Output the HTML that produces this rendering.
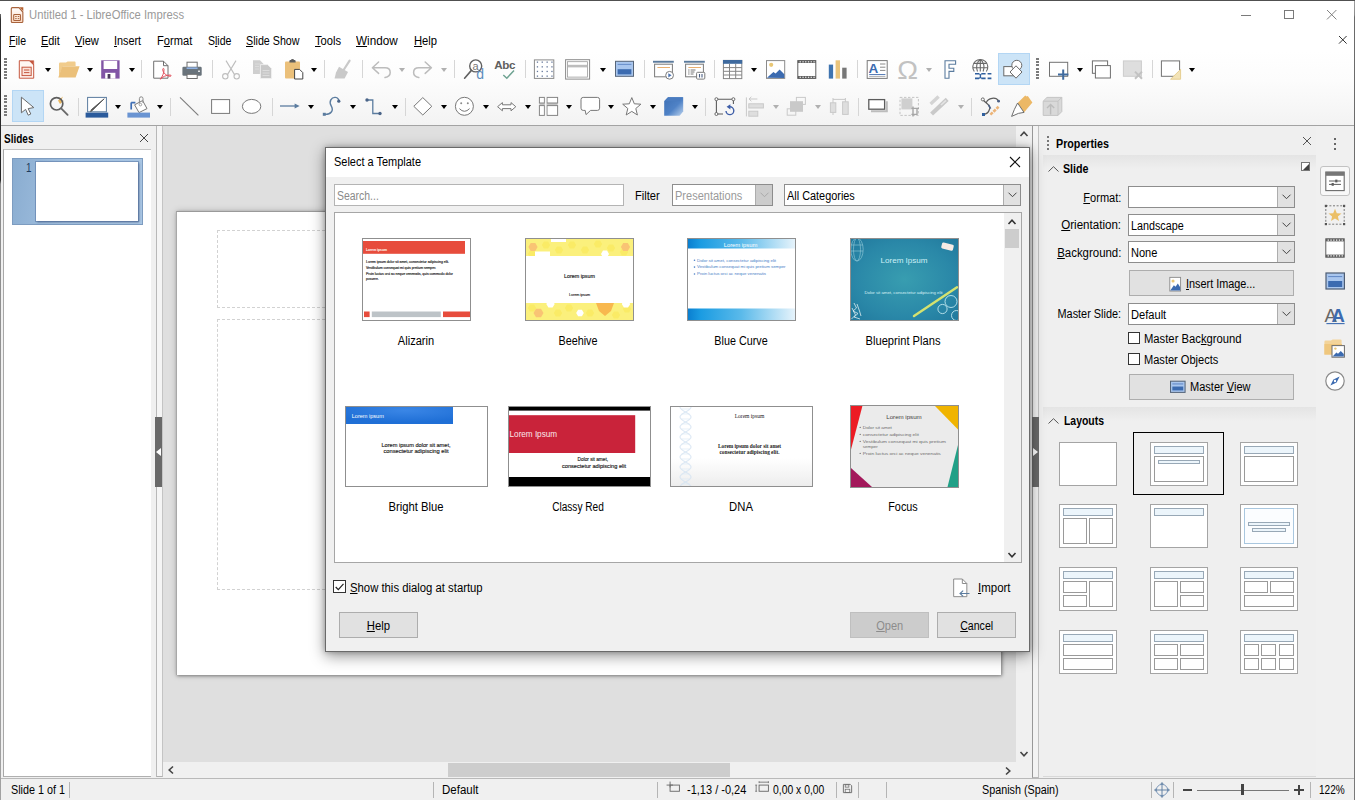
<!DOCTYPE html><html><head><meta charset="utf-8"><title>Untitled 1 - LibreOffice Impress</title><style>
*{box-sizing:border-box;margin:0;padding:0}
html,body{width:1355px;height:800px;overflow:hidden;background:#f0f0f0}
body{position:relative;font-family:"Liberation Sans",sans-serif;font-size:12px;letter-spacing:-0.33px;color:#000;line-height:14px}
.a{position:absolute}
.t{position:absolute;white-space:nowrap;height:14px;line-height:14px;letter-spacing:0;transform-origin:0 50%}
.tr{transform-origin:100% 50%}
.fx{display:inline-block;letter-spacing:0;white-space:nowrap}
u{text-decoration:underline;text-underline-offset:1px}
.sep{position:absolute;width:1px;height:18px;background:#d6d6d6}
.dd{position:absolute;width:0;height:0;border-left:3px solid transparent;border-right:3px solid transparent;border-top:4px solid #000}
.dd.g{border-top-color:#b0b0b0}
svg{position:absolute;overflow:visible}
.combo{position:absolute;height:22px;background:#fff;border:1px solid #8d8d8d}
.combo .btn{position:absolute;right:0;top:0;bottom:0;width:17px;background:#e1e1e1;border-left:1px solid #adadad}
.combo .txt{position:absolute;left:2px;top:4px;white-space:nowrap;height:14px;line-height:14px}
.btnb{position:absolute;background:#e1e1e1;border:1px solid #adadad;text-align:center}
.lay{position:absolute;width:58px;height:44px;background:#fff;border:1px solid #a4a4a4}
.lay i{position:absolute;display:block;border:1px solid #9a9a9a;background:#fff}
.lay i.h{background:#ecf5fb;border-color:#98a8b6}
.lay i.f{background:#fbfdff;border-color:#a9c7df}
.lbl{position:absolute;white-space:nowrap;text-align:center;width:160px;height:14px;line-height:14px;font-size:12px}
</style></head><body>
<div class="a" style="left:0;top:0;width:1355px;height:30px;background:#fff"></div>
<div class="a" style="left:0;top:0;width:1355px;height:1px;background:#505050"></div>
<svg class="ic" style="left:7.5px;top:6.0px" width="18" height="18" viewBox="0 0 24 24"><defs><linearGradient id="apg" x1="0" y1="0" x2="0" y2="1"><stop offset="0" stop-color="#fff"/><stop offset="1" stop-color="#fbd5bd"/></linearGradient></defs><path d="M4.4 3.6Q4.4 2.2 5.8 2.2H14.6L19.8 8V20.6Q19.8 22 18.4 22H5.8Q4.4 22 4.4 20.6Z" fill="url(#apg)" stroke="#a8633c" stroke-width="1.5"/><path d="M15.4 1.6H20.4V7Z" fill="#b5602f"/><rect x="7.6" y="11.4" width="9" height="8" rx="1" fill="#fde6d6" stroke="#a8633c" stroke-width="1.4"/><path d="M9.6 14H11.6M13 14H15M9.6 16.8H11.6M13 16.8H15" stroke="#a8633c" stroke-width="1.3"/></svg>
<div class="t" style="left:29px;top:8.3px;transform:scaleX(0.9386);color:#9a9a9a">Untitled 1 - LibreOffice Impress</div>
<div class="a" style="left:1241px;top:14.5px;width:9.5px;height:1px;background:#7a7a7a"></div>
<div class="a" style="left:1284px;top:9.5px;width:9.5px;height:9.5px;border:1px solid #7a7a7a"></div>
<svg style="left:1327.4px;top:9.5px" width="9.4" height="9.4" viewBox="0 0 10 10"><path d="M0 0L10 10M10 0L0 10" stroke="#7a7a7a" stroke-width="1" fill="none"/></svg>
<div class="a" style="left:0;top:30px;width:1355px;height:21px;background:#fff"></div>
<div class="t" style="left:8.8px;top:34px;transform:scaleX(0.8788);"><u>F</u>ile</div>
<div class="t" style="left:40.9px;top:34px;transform:scaleX(0.9094);"><u>E</u>dit</div>
<div class="t" style="left:74.8px;top:34px;transform:scaleX(0.9226);"><u>V</u>iew</div>
<div class="t" style="left:114.2px;top:34px;transform:scaleX(0.9033);"><u>I</u>nsert</div>
<div class="t" style="left:156.8px;top:34px;transform:scaleX(0.9263);">F<u>o</u>rmat</div>
<div class="t" style="left:207.5px;top:34px;transform:scaleX(0.8768);">S<u>l</u>ide</div>
<div class="t" style="left:246.4px;top:34px;transform:scaleX(0.8912);"><u>S</u>lide Show</div>
<div class="t" style="left:315.2px;top:34px;transform:scaleX(0.9316);"><u>T</u>ools</div>
<div class="t" style="left:356.3px;top:34px;transform:scaleX(0.9769);"><u>W</u>indow</div>
<div class="t" style="left:413.5px;top:34px;transform:scaleX(0.9357);"><u>H</u>elp</div>
<svg style="left:1339px;top:36.3px" width="7.6" height="7.6" viewBox="0 0 9 9"><path d="M0 0L9 9M9 0L0 9" stroke="#222" stroke-width="1.1" fill="none"/></svg>
<div class="a" style="left:0;top:51px;width:1355px;height:75px;background:linear-gradient(#ffffff,#fcfcfc 40%,#f3f3f3);border-bottom:1px solid #a3a3a3"></div>
<div class="a" style="left:4px;top:58px;width:2.6px;height:22.4px;background:repeating-linear-gradient(#7a7a7a 0 2px,transparent 2px 3.2px)"></div>
<div class="a" style="left:4px;top:95px;width:2.6px;height:22.4px;background:repeating-linear-gradient(#7a7a7a 0 2px,transparent 2px 3.2px)"></div>
<div class="a" style="left:1036px;top:58px;width:2.6px;height:22.4px;background:repeating-linear-gradient(#7a7a7a 0 2px,transparent 2px 3.2px)"></div>
<div class="a" style="left:998px;top:53px;width:32px;height:32px;background:#cce4f7;border:1px solid #b3d6f4"></div>
<div class="a" style="left:12px;top:90px;width:32px;height:32px;background:#cce4f7;border:1px solid #b3d6f4"></div>
<div class="dd" style="left:44.7px;top:67.6px"></div>
<div class="dd" style="left:86.8px;top:67.6px"></div>
<div class="dd" style="left:128.5px;top:67.6px"></div>
<div class="sep" style="left:141.0px;top:60.2px"></div>
<div class="sep" style="left:211.5px;top:60.2px"></div>
<div class="dd" style="left:310.7px;top:67.6px"></div>
<div class="sep" style="left:323.5px;top:60.2px"></div>
<div class="sep" style="left:362.0px;top:60.2px"></div>
<div class="dd g" style="left:399.0px;top:67.6px"></div>
<div class="dd g" style="left:441.0px;top:67.6px"></div>
<div class="sep" style="left:453.7px;top:60.2px"></div>
<div class="sep" style="left:524.5px;top:60.2px"></div>
<div class="dd" style="left:600.0px;top:67.6px"></div>
<div class="sep" style="left:643.5px;top:60.2px"></div>
<div class="sep" style="left:714.0px;top:60.2px"></div>
<div class="dd" style="left:751.0px;top:67.6px"></div>
<div class="sep" style="left:857.0px;top:60.2px"></div>
<div class="dd g" style="left:925.6px;top:67.6px"></div>
<div class="dd" style="left:1077.0px;top:67.6px"></div>
<div class="sep" style="left:1152.0px;top:60.2px"></div>
<div class="dd" style="left:1188.6px;top:67.6px"></div>
<div class="sep" style="left:78.0px;top:97.7px"></div>
<div class="dd" style="left:115.0px;top:105.1px"></div>
<div class="dd" style="left:157.0px;top:105.1px"></div>
<div class="sep" style="left:170.0px;top:97.7px"></div>
<div class="sep" style="left:271.5px;top:97.7px"></div>
<div class="dd" style="left:308.0px;top:105.1px"></div>
<div class="dd" style="left:349.6px;top:105.1px"></div>
<div class="dd" style="left:391.5px;top:105.1px"></div>
<div class="sep" style="left:404.5px;top:97.7px"></div>
<div class="dd" style="left:441.0px;top:105.1px"></div>
<div class="dd" style="left:482.6px;top:105.1px"></div>
<div class="dd" style="left:524.5px;top:105.1px"></div>
<div class="dd" style="left:566.0px;top:105.1px"></div>
<div class="dd" style="left:608.0px;top:105.1px"></div>
<div class="dd" style="left:649.8px;top:105.1px"></div>
<div class="dd" style="left:691.7px;top:105.1px"></div>
<div class="sep" style="left:704.7px;top:97.7px"></div>
<div class="dd g" style="left:772.5px;top:105.1px"></div>
<div class="dd g" style="left:814.7px;top:105.1px"></div>
<div class="sep" style="left:858.0px;top:97.7px"></div>
<div class="dd g" style="left:958.0px;top:105.1px"></div>
<div class="sep" style="left:970.6px;top:97.7px"></div>
<svg style="left:0;top:0" width="1355" height="126" viewBox="0 0 1355 126"><path d="M19.3 60.7H29.5L33.7 64.9V78.2H19.3Z" fill="#fff7f3" stroke="#c5573f"/><path d="M29.5 60.7L33.7 64.9V60.7Z" fill="#c5573f" stroke="#c5573f" stroke-width=".6"/><rect x="22" y="67.2" width="9.2" height="8.4" fill="#fbe3da" stroke="#c5573f"/><path d="M24 70H29.4M24 72.6H29.4" stroke="#c5573f" stroke-width="1"/><path d="M59 76.5V63.8Q59 62.6 60.2 62.6H66L67.6 61.6H74.6Q75.6 61.6 75.6 62.8V66H62.8Z" fill="#f1cc8c"/><path d="M58.3 77.6L62.3 66.2H79.6L75.6 77.6Z" fill="#ebc07a"/><path d="M101.2 60.3H119.6V78.6H101.2Z" fill="#8155a6"/><rect x="103.6" y="60.9" width="13.6" height="8.1" fill="#fff"/><rect x="105.2" y="72.8" width="10.2" height="5.8" fill="#fff"/><rect x="107.6" y="74" width="2.8" height="4.6" fill="#4a3a5c"/><path d="M153.7 61.2H163.5L168 65.7V78.2H153.7Z" fill="#fff" stroke="#6e6e6e"/><path d="M163.5 61.2V65.7H168" fill="none" stroke="#6e6e6e"/><path d="M160.3 79.2C162.5 76.5 164.2 72.5 164 69.3C163.9 68 162.6 68.2 162.7 69.6C163 73 166.5 76 170.3 76.3C171.6 76.3 171.3 75 170 75C166.5 75 162.5 76.8 160.3 79.2Z" fill="none" stroke="#e2505c" stroke-width="1"/><rect x="187" y="62.2" width="10.2" height="6" fill="#fff" stroke="#6e6e6e"/><rect x="182.4" y="66.8" width="19.3" height="9" rx="1.2" fill="#69737b"/><rect x="186.6" y="67.4" width="11" height="1.6" fill="#8fb0e0"/><rect x="187" y="74.3" width="10.2" height="4.2" fill="#fff" stroke="#6e6e6e"/><rect x="198" y="70.6" width="2" height="1.2" fill="#fff"/><g fill="none" stroke="#bebebe" stroke-width="1.1"><path d="M226 60.6L235 75.4M236 60.6L227 75.4"/><circle cx="225.3" cy="76.3" r="2.7"/><circle cx="236.7" cy="76.3" r="2.7"/></g><path d="M253 60.3H260L263.6 63.9V74H253Z" fill="#cfcfcf"/><path d="M260.4 64.6H267.6L271.6 68.6V78.6H260.4Z" fill="#c8c8c8" stroke="#f4f4f4" stroke-width=".8"/><path d="M255 64H260M255 66.5H259M255 69H259M262.5 70.5H269.5M262.5 73H269.5M262.5 75.5H269.5" stroke="#dedede" stroke-width=".9"/><rect x="285" y="61.6" width="15" height="17" rx="1" fill="#ebc07a"/><path d="M289.4 62.6V61Q289.4 60 290.4 60H291Q291 59 292.5 59Q294 59 294 60H294.6Q295.6 60 295.6 61V62.6Z" fill="#5d5d5d"/><path d="M294.6 69.4H299.6L302.8 72.6V79H294.6Z" fill="#fff" stroke="#454545"/><path d="M349.6 60.6L343.6 70" stroke="#c9c9c9" stroke-width="2.2" stroke-linecap="round"/><path d="M339 66.8L348 72L344.6 78.6H334.6L336 72.5Z" fill="#c9c9c9"/><g fill="none" stroke="#bcbcbc" stroke-width="1.5" stroke-linecap="round" stroke-linejoin="round"><path d="M378.6 62L372.4 67.7L378.6 73.4M372.6 67.7H385Q390.2 67.7 390.2 72.4Q390.2 76.4 385 77.6"/><path d="M425.2 62L431.4 67.7L425.2 73.4M431.2 67.7H418.8Q413.6 67.7 413.6 72.4Q413.6 76.4 418.8 77.6"/></g><circle cx="475.7" cy="65.9" r="6" fill="#fff" stroke="#606060" stroke-width="1.4"/><path d="M471.4 70.4L464.6 78.2" stroke="#606060" stroke-width="1.6" stroke-linecap="round"/><text x="472.4" y="69.6" font-size="11" fill="#777" font-family="Liberation Sans, sans-serif">a</text><text x="476.2" y="79.4" font-size="14" fill="#5d8dbd" font-family="Liberation Sans, sans-serif">d</text><text x="494.2" y="69" font-size="11.2" font-weight="bold" fill="#5f5f5f" font-family="Liberation Sans, sans-serif" textLength="21" lengthAdjust="spacingAndGlyphs">Abc</text><path d="M503.3 75L506.8 78.2L514 70.6" fill="none" stroke="#6fa392" stroke-width="1.5"/><rect x="534.4" y="59.9" width="19.4" height="18.5" fill="#fff" stroke="#8a8a8a"/><rect x="536.8" y="61.5" width="1.3" height="1.3" fill="#64779a"/><rect x="536.8" y="66.2" width="1.3" height="1.3" fill="#64779a"/><rect x="536.8" y="70.8" width="1.3" height="1.3" fill="#64779a"/><rect x="536.8" y="75.5" width="1.3" height="1.3" fill="#64779a"/><rect x="541.6" y="61.5" width="1.3" height="1.3" fill="#64779a"/><rect x="541.6" y="66.2" width="1.3" height="1.3" fill="#64779a"/><rect x="541.6" y="70.8" width="1.3" height="1.3" fill="#64779a"/><rect x="541.6" y="75.5" width="1.3" height="1.3" fill="#64779a"/><rect x="546.5" y="61.5" width="1.3" height="1.3" fill="#64779a"/><rect x="546.5" y="66.2" width="1.3" height="1.3" fill="#64779a"/><rect x="546.5" y="70.8" width="1.3" height="1.3" fill="#64779a"/><rect x="546.5" y="75.5" width="1.3" height="1.3" fill="#64779a"/><rect x="551.3" y="61.5" width="1.3" height="1.3" fill="#64779a"/><rect x="551.3" y="66.2" width="1.3" height="1.3" fill="#64779a"/><rect x="551.3" y="70.8" width="1.3" height="1.3" fill="#64779a"/><rect x="551.3" y="75.5" width="1.3" height="1.3" fill="#64779a"/><rect x="565.6" y="59.7" width="24" height="19.4" fill="#fff" stroke="#8a8a8a"/><rect x="567.6" y="61.7" width="20" height="15.4" fill="#fff" stroke="#9a9a9a" stroke-width=".8"/><rect x="568" y="64.8" width="19.2" height="2.6" fill="#bdbdbd"/><rect x="615.5" y="61.3" width="18" height="15" fill="#a9c6ee" stroke="#566579"/><rect x="617.6" y="69.2" width="13.8" height="5.2" fill="#3c6bb0"/><path d="M617.6 64.4H631.4" stroke="#5f86c4" stroke-width=".9"/><rect x="653" y="60.8" width="20.8" height="1.9" fill="#5a7a9c"/><rect x="654.6" y="64.2" width="17.8" height="12.6" fill="#fff" stroke="#7a7a7a"/><path d="M657.4 67.5H670" stroke="#eab070" stroke-width="1"/><circle cx="669.6" cy="75.3" r="3.9" fill="#fff" stroke="#7a7a7a"/><path d="M668.3 73.2L671.6 75.3L668.3 77.4Z" fill="#4a72b0"/><rect x="684" y="60.8" width="20.8" height="1.9" fill="#5a7a9c"/><rect x="685.6" y="64.2" width="17.8" height="12.6" fill="#fff" stroke="#7a7a7a"/><path d="M688.4 67.5H701" stroke="#eab070" stroke-width="1"/><path d="M688.4 70H689.4M688.4 72H689.4M688.4 74H689.4" stroke="#444" stroke-width="1"/><path d="M690.6 70H695.5M690.6 72H694.5M690.6 74H693.5" stroke="#666" stroke-width=".9"/><rect x="696.6" y="72.3" width="8.2" height="6.8" rx="1" fill="#fff" stroke="#7a7a7a"/><path d="M699.5 74V77.6M702 74V77.6" stroke="#4a5f85" stroke-width="1.1"/><rect x="723.4" y="60.4" width="18.4" height="18.2" fill="#fff" stroke="#858585"/><rect x="723" y="60" width="19.2" height="3.8" fill="#3f6a9e"/><path d="M729.5 63.8V78.6M735.7 63.8V78.6M723.4 67.6H741.8M723.4 71.3H741.8M723.4 75H741.8" stroke="#858585" stroke-width="1"/><rect x="766.5" y="60.6" width="18.2" height="17.8" fill="#fff" stroke="#8a8a8a"/><circle cx="771.2" cy="64.8" r="2.1" fill="#e9c776"/><path d="M767 77.8L773.4 72L775.6 73.6L779.6 69.6L784.3 74.2V77.9Z" fill="#3c6bb0"/><rect x="797.8" y="60.6" width="18" height="17.8" fill="#fff" stroke="#5e5e5e"/><rect x="797.8" y="60.6" width="18" height="2.4" fill="#5e5e5e"/><rect x="797.8" y="76" width="18" height="2.4" fill="#5e5e5e"/><rect x="799.6" y="61.3" width="1.3" height="1.1" fill="#fff"/><rect x="799.6" y="76.7" width="1.3" height="1.1" fill="#fff"/><rect x="802.4" y="61.3" width="1.3" height="1.1" fill="#fff"/><rect x="802.4" y="76.7" width="1.3" height="1.1" fill="#fff"/><rect x="805.1" y="61.3" width="1.3" height="1.1" fill="#fff"/><rect x="805.1" y="76.7" width="1.3" height="1.1" fill="#fff"/><rect x="807.9" y="61.3" width="1.3" height="1.1" fill="#fff"/><rect x="807.9" y="76.7" width="1.3" height="1.1" fill="#fff"/><rect x="810.6" y="61.3" width="1.3" height="1.1" fill="#fff"/><rect x="810.6" y="76.7" width="1.3" height="1.1" fill="#fff"/><rect x="813.4" y="61.3" width="1.3" height="1.1" fill="#fff"/><rect x="813.4" y="76.7" width="1.3" height="1.1" fill="#fff"/><rect x="828.8" y="64.6" width="4.3" height="14" fill="#3f74b0"/><rect x="835.6" y="60.3" width="4.4" height="18.3" fill="#e9c47c"/><rect x="842.2" y="67.7" width="4.4" height="10.9" fill="#777"/><rect x="867.2" y="60.6" width="20" height="17.8" fill="#fff" stroke="#7a7a7a"/><text x="868.4" y="72.6" font-size="13.5" font-weight="bold" fill="#3c6bb0" font-family="Liberation Sans, sans-serif">A</text><path d="M880 64H885.4M880 67.2H885.4M880 70.4H885.4" stroke="#8a8a8a" stroke-width="1"/><path d="M869.2 74.6H885.4" stroke="#4a72b0" stroke-width="1"/><path d="M869.2 76.6H885.4" stroke="#9a9a9a" stroke-width=".8"/><text x="897.2" y="78.6" font-size="25" fill="#c2c2c2" font-family="Liberation Sans, sans-serif" textLength="20.4" lengthAdjust="spacingAndGlyphs">Ω</text><path d="M945 60.8H955.6V64.2H949V68.2H953.8V71.4H949V78.2H945Z" fill="#fff" stroke="#5b7c9f" stroke-width="1.1"/><g fill="none" stroke="#686868" stroke-width="1.1"><path d="M974.3 71.5A7.5 7.5 0 1 1 986.3 71.5"/><path d="M980.3 59.5V71.5M977.5 71.5C975.6 67.6 976.6 61.6 980.3 59.6C984 61.6 985 67.6 983.1 71.5M973.8 63.4H986.8M972.9 67.8H987.7"/></g><g stroke="#2f5f9e" stroke-width="1.6" fill="none"><path d="M975 73.8H979M981.4 73.8H985.6M987.6 73.8H991.4M975 78.4H979M981.4 78.4H985.6M987.6 78.4H991.4"/><path d="M979 73.8C981 73.8 980 78.4 981.6 78.4M979 78.4C981 78.4 980 73.8 981.6 73.8" stroke-width="1.1"/></g><rect x="1003.8" y="66.6" width="10.4" height="9.2" fill="#fff" stroke="#6a6a6a"/><circle cx="1016.8" cy="65.3" r="5" fill="#fff" stroke="#6a6a6a"/><path d="M1016 65.8L1022 72L1016 78.2L1010 72Z" fill="#fff" stroke="#6a6a6a"/><rect x="1049.5" y="62.3" width="18.2" height="14" fill="#fff" stroke="#727272"/><path d="M1063.2 69.4V79.8M1058 74.6H1068.4" stroke="#3f6a9e" stroke-width="2"/><rect x="1092.4" y="60.9" width="15.2" height="12.4" fill="#fff" stroke="#6e6e6e"/><rect x="1095.4" y="65.6" width="15" height="12.4" fill="#fff" stroke="#6e6e6e"/><rect x="1123.4" y="60.9" width="18" height="15.4" fill="#dedede" stroke="#cdcdcd"/><path d="M1135 71.6L1142 78.8M1142 71.6L1135 78.8" stroke="#c2c2c2" stroke-width="2"/><rect x="1161.4" y="60.9" width="18.2" height="15.4" fill="#fff" stroke="#727272"/><path d="M1170.6 79.2H1180.6V69.4Z" fill="#f3e3b6" stroke="#e6cf92" stroke-width="1"/><path d="M21.4 97.2V112.8L25.6 109.4L28.2 115.2L30.8 114L28.2 108.6L33.8 107.6Z" fill="#fff" stroke="#6a6a6a" stroke-linejoin="round"/><path d="M58 100.6L63 96.6L60.8 101.2L64 100.4L60 104Z" fill="#ebb860"/><circle cx="56.6" cy="103.8" r="6.2" fill="none" stroke="#5e5e5e" stroke-width="1.7"/><path d="M61.4 108.6L67.6 114.8" stroke="#6a6a6a" stroke-width="1.9" stroke-linecap="round"/><rect x="87.6" y="97.4" width="18.8" height="14.4" fill="#fff" stroke="#5b7c9f"/><path d="M104.2 98.8L92.4 110.4L90.6 111.6L91.4 109.6Z" fill="#555" stroke="#555" stroke-width=".9"/><rect x="85.6" y="112.6" width="22.6" height="5" fill="#2b5b9c"/><path d="M131.2 102.6V109.4M131.2 102.6H135.4" stroke="#3f6fb5" stroke-width="1.7" fill="none"/><path d="M134.6 104.8L142.6 100.6L147 108.6L139 112.6Z" fill="#fff" stroke="#777"/><path d="M139.4 103.4V98.6Q139.4 96.8 141.2 96.8Q143 96.8 143 98.6V103" fill="none" stroke="#8a8a8a"/><circle cx="140.4" cy="104.6" r="1.3" fill="#fff" stroke="#8a8a8a" stroke-width=".8"/><rect x="127.4" y="112.6" width="22.6" height="5" fill="#6a94d2"/><path d="M180 97.4L198.4 115.4" stroke="#7c7c7c" stroke-width="1.1"/><rect x="211.6" y="99.6" width="18" height="13.8" fill="#fff" stroke="#787878"/><ellipse cx="251.6" cy="106.4" rx="9.2" ry="7" fill="#fff" stroke="#787878"/><path d="M280 106H296" stroke="#5b7c9f" stroke-width="1.3"/><path d="M294.6 103.6L299.6 106L294.6 108.4Z" fill="#5b7c9f"/><path d="M324.4 114.3C331 114.8 334 110.4 331.2 105.8C328.6 101.6 331.4 97 335.4 97.4C337.6 97.7 338.8 99.4 338.8 101.2" fill="none" stroke="#5b7c9f" stroke-width="1.4"/><rect x="322.8" y="112.8" width="3" height="3" fill="#5b7c9f"/><circle cx="338.8" cy="101.2" r="1.6" fill="#4a6488"/><path d="M367 100H372.8V113.5H380" fill="none" stroke="#5b7c9f" stroke-width="1.3"/><circle cx="367" cy="100" r="1.7" fill="#4a6488"/><circle cx="380" cy="113.5" r="1.7" fill="#4a6488"/><path d="M422.8 97.6L431.8 106.3L422.8 115L413.8 106.3Z" fill="#fff" stroke="#787878"/><circle cx="464.4" cy="106.3" r="9" fill="#fff" stroke="#787878"/><circle cx="461.2" cy="103.2" r="1" fill="#8a8a8a"/><circle cx="467.8" cy="103.2" r="1" fill="#8a8a8a"/><path d="M459.4 108.6Q464.4 114 469.6 108.6" fill="none" stroke="#787878"/><path d="M497.6 106.7L502.4 102.6V104.8H511V102.6L515.8 106.7L511 110.8V108.6H502.4V110.8Z" fill="#fff" stroke="#787878"/><rect x="539.4" y="97.4" width="18.2" height="18" fill="#c4c4c4"/><rect x="539.4" y="97.4" width="5" height="5.6" fill="#fff" stroke="#858585"/><rect x="547" y="97.4" width="10.6" height="5.6" fill="#fff" stroke="#858585"/><rect x="539.4" y="105.6" width="5" height="9.8" fill="#fff" stroke="#858585"/><rect x="547" y="105.6" width="10.6" height="9.8" fill="#fff" stroke="#858585"/><rect x="544.9" y="96.9" width="1.6" height="19" fill="#f7f7f7"/><path d="M583.2 97.4H597.4Q599.6 97.4 599.6 99.6V108.2Q599.6 110.4 597.4 110.4H590.6L586 114.6L585.2 110.4H583.2Q581 110.4 581 108.2V99.6Q581 97.4 583.2 97.4Z" fill="#fff" stroke="#787878"/><polygon points="631.8,97.6 634.3,103.8 640.9,104.2 635.8,108.5 637.4,115.0 631.8,111.4 626.2,115.0 627.8,108.5 622.7,104.2 629.3,103.8" fill="#fff" stroke="#787878"/><defs><linearGradient id="cg" x1="0" y1="0" x2="1" y2="1"><stop offset="0" stop-color="#3c6fb4"/><stop offset="0.55" stop-color="#4f82c6"/><stop offset="1" stop-color="#bcd3ee"/></linearGradient></defs><path d="M664.2 101.2L668 97.2H683.2V111.4L679.6 115.8H664.2Z" fill="url(#cg)"/><path d="M664.2 101.2L668 97.2H683.2L679.6 101.2Z" fill="#4a7cc0"/><path d="M716.4 99.2H733.4M716.4 99.2V114M733.4 99.2V104M716.4 114H723" fill="none" stroke="#5c5c5c" stroke-width="1.1"/><circle cx="716.4" cy="99.2" r="1.5" fill="#fff" stroke="#5c5c5c" stroke-width=".9"/><circle cx="733.4" cy="99.2" r="1.5" fill="#fff" stroke="#5c5c5c" stroke-width=".9"/><circle cx="716.4" cy="114" r="1.5" fill="#fff" stroke="#5c5c5c" stroke-width=".9"/><path d="M729.6 106.8A3.9 3.9 0 1 1 726 111" fill="none" stroke="#3e5ea8" stroke-width="1.4"/><path d="M730.4 104.2V109.4L726.6 106.8Z" fill="#3e5ea8"/><path d="M746.4 97.4V116.4" stroke="#c9c9c9" stroke-width="1"/><path d="M757.4 99H749M751.4 96.8L749 99L751.4 101.2" fill="none" stroke="#c9c9c9"/><rect x="748.8" y="103.8" width="14.6" height="4.2" fill="#dedede" stroke="#c9c9c9"/><rect x="748.8" y="111.2" width="9" height="5" fill="#dedede" stroke="#c9c9c9"/><rect x="796.4" y="97.4" width="9" height="7" fill="none" stroke="#c9c9c9"/><rect x="787.2" y="108.8" width="8.6" height="6.4" fill="none" stroke="#c9c9c9"/><rect x="790" y="101.2" width="13" height="10.6" fill="#c9c9c9"/><rect x="830.4" y="102.8" width="5.4" height="9.6" fill="#dedede" stroke="#c9c9c9"/><rect x="842.6" y="101.8" width="5.6" height="12.6" fill="#dedede" stroke="#c9c9c9"/><path d="M833 98V102.8M845.4 98V101.8M833 99.4H845.4M833 112.4V115" fill="none" stroke="#c9c9c9"/><path d="M871 111.2H886.8V101.2" fill="none" stroke="#bcbcbc" stroke-width="2"/><rect x="868.8" y="99.6" width="15.8" height="9.6" fill="#fff" stroke="#5c5c5c" stroke-width="1.3"/><rect x="900" y="97.4" width="18.4" height="18" fill="none" stroke="#c4c4c4" stroke-dasharray="2.4 1.6"/><rect x="901.4" y="98.4" width="11" height="11" fill="#cfcfcf"/><path d="M911.4 108.4H919M913 106.6V116.6M911.4 114.4H917V108.4" fill="none" stroke="#a6a6a6" stroke-width="1.4"/><path d="M931.6 114L947.2 99.4" stroke="#c9c9c9" stroke-width="4.2"/><path d="M930.6 104L938.6 96.6" stroke="#d4d4d4" stroke-width="3.4"/><path d="M941 105L946 100.4" stroke="#e4e4e4" stroke-width="1.6"/><path d="M982.8 99.4C986 104 990.6 104.6 989.6 109C988.6 112.6 986 114.2 983.6 114.4M986.4 102.4C988 98 996 96.4 998.4 101" fill="none" stroke="#5c5c5c" stroke-width="1.2"/><circle cx="982.8" cy="99.4" r="1.5" fill="#fff" stroke="#5c5c5c" stroke-width=".9"/><circle cx="998.6" cy="101.2" r="1.4" fill="#4a5f85"/><path d="M988.6 104.8L990.6 108.6" stroke="#4a5f85" stroke-width="1.6"/><rect x="982" y="113" width="3" height="3" fill="#2f5f9e"/><path d="M990.4 114.6L998.6 106.8" stroke="#ecb478" stroke-width="2.6" stroke-dasharray="3.2 1"/><path d="M1017.6 103L1025.2 95.6Q1026.4 97 1027.8 96L1032.4 102.4L1024 112.4Z" fill="#ecb866"/><path d="M1017.6 103L1024 112.4L1018.4 113.4L1011.6 116.4L1014.4 109.4Z" fill="#fff" stroke="#6e6e6e" stroke-width="1" stroke-linejoin="round"/><path d="M1043.2 101.2L1047 97.4H1061.8V111.6L1058 115.4H1043.2Z" fill="#d9d9d9" stroke="#c4c4c4"/><path d="M1043.2 101.2H1058V115.4M1058 101.2L1061.8 97.4" fill="none" stroke="#c4c4c4"/><path d="M1050.6 114.6V104.6M1047 108L1050.6 104.4L1054.2 108" fill="none" stroke="#bcbcbc" stroke-width="1.4"/></svg>
<div class="t" style="left:3.8px;top:132px;transform:scaleX(0.8350);font-weight:bold;">Slides</div>
<svg style="left:140px;top:134px" width="8" height="8" viewBox="0 0 8 8"><path d="M0 0L8 8M8 0L0 8" stroke="#444" stroke-width="1" fill="none"/></svg>
<div class="a" style="left:3px;top:149px;width:148px;height:628px;background:#fff;border-top:1px solid #c4c4c4;border-left:1px solid #a8a8a8;border-bottom:1px solid #b0b0b0"></div>
<div class="a" style="left:12px;top:158px;width:131px;height:67px;background:linear-gradient(100deg,#89acd0,#a4c2e1 45%,#a8c5e3);border:1px solid #7d9cc0"></div>
<div class="a" style="left:36px;top:162px;width:102px;height:59px;background:#fff;box-shadow:0 0 0 1px rgba(90,120,165,.55),1px 1px 2px rgba(40,60,100,.7)"></div>
<div class="t" style="left:25.5px;top:161px;transform:scaleX(0.8244);color:#1c3a5c">1</div>
<div class="a" style="left:156px;top:126px;width:7px;height:651px;background:#f5f5f5;border-left:1px solid #b8b8b8;border-right:1px solid #c4c4c4;border-bottom:1px solid #b0b0b0"></div>
<div class="a" style="left:155px;top:417px;width:7px;height:70px;background:#696969"></div>
<svg style="left:156px;top:448px" width="5" height="8" viewBox="0 0 5 8"><path d="M5 0L0 4L5 8Z" fill="#fff"/></svg>
<div class="a" style="left:163px;top:126px;width:853px;height:636px;background:#dfdfdf"></div>
<div class="a" style="left:176px;top:211px;width:825px;height:464px;background:#fff;border-top:1px solid #9a9a9a;border-left:1px solid #a8a8a8;box-shadow:1px 1px 3px rgba(0,0,0,.4),0 0 7px rgba(0,0,0,.16)"></div>
<div class="a" style="left:217px;top:229.5px;width:743px;height:78px;border:1px dashed #d2d2d2"></div>
<div class="a" style="left:217px;top:319px;width:743px;height:271px;border:1px dashed #d2d2d2"></div>
<div class="a" style="left:1016px;top:126px;width:16px;height:636px;background:#f0f0f0"></div>
<svg style="left:1020px;top:131px" width="8" height="6" viewBox="0 0 8 6"><path d="M0.5 5L4 1.2L7.5 5" stroke="#444" stroke-width="1.6" fill="none"/></svg>
<svg style="left:1019.8px;top:751px" width="8" height="6" viewBox="0 0 8 6"><path d="M0.5 1L4 4.8L7.5 1" stroke="#444" stroke-width="1.6" fill="none"/></svg>
<div class="a" style="left:163px;top:762px;width:869px;height:16px;background:#f0f0f0"></div>
<div class="a" style="left:448px;top:763px;width:282px;height:14px;background:#cdcdcd"></div>
<svg style="left:168px;top:766px" width="6" height="8" viewBox="0 0 6 8"><path d="M5 0.5L1.2 4L5 7.5" stroke="#444" stroke-width="1.6" fill="none"/></svg>
<svg style="left:1005px;top:766.8px" width="6" height="8" viewBox="0 0 6 8"><path d="M1 0.5L4.8 4L1 7.5" stroke="#444" stroke-width="1.6" fill="none"/></svg>
<div class="a" style="left:1032px;top:126px;width:7px;height:652px;background:#f3f3f3;border-left:1px solid #989898;border-right:1px solid #c2c2c2;border-bottom:1px solid #b8b8b8"></div>
<div class="a" style="left:1032px;top:417px;width:7px;height:70px;background:#696969"></div>
<svg style="left:1033px;top:448px" width="5" height="8" viewBox="0 0 5 8"><path d="M0 0L5 4L0 8Z" fill="#fff"/></svg>
<div class="a" style="left:1039px;top:126px;width:277px;height:652px;background:#efefef"></div>
<div class="a" style="left:1316px;top:126px;width:39px;height:652px;background:#f0f0f0"></div>
<div class="a" style="left:1047px;top:136px;width:2px;height:14px;background:repeating-linear-gradient(#777 0 2px,transparent 2px 4px)"></div>
<div class="t" style="left:1055.8px;top:136.5px;transform:scaleX(0.8931);font-weight:bold;">Properties</div>
<svg style="left:1302.5px;top:137px" width="8" height="8" viewBox="0 0 8 8"><path d="M0 0L8 8M8 0L0 8" stroke="#555" stroke-width="1" fill="none"/></svg>
<div class="a" style="left:1043px;top:155px;width:273px;height:252px;background:linear-gradient(#e4e4e4,#efefef 14px,#efefef)"></div>
<div class="a" style="left:1043px;top:407px;width:273px;height:370px;background:linear-gradient(#e4e4e4,#efefef 14px,#efefef);border-bottom:1px solid #d8d8d8"></div>
<svg style="left:1048px;top:166px" width="11" height="6" viewBox="0 0 11 6"><path d="M0.5 5.5L5.5 0.7L10.5 5.5" stroke="#555" stroke-width="1" fill="none"/></svg>
<div class="t" style="left:1063.4px;top:162px;transform:scaleX(0.8899);font-weight:bold;">Slide</div>
<svg style="left:1048px;top:418px" width="11" height="6" viewBox="0 0 11 6"><path d="M0.5 5.5L5.5 0.7L10.5 5.5" stroke="#555" stroke-width="1" fill="none"/></svg>
<div class="t" style="left:1063.5px;top:414px;transform:scaleX(0.8696);font-weight:bold;">Layouts</div>
<svg style="left:1301px;top:162px" width="9" height="9" viewBox="0 0 9 9"><rect x="0.5" y="0.5" width="8" height="8" fill="#fff" stroke="#777"/><path d="M8 2V8H2Z" fill="#444"/></svg>
<div class="t tr" style="right:233.5px;top:190.5px;transform:scaleX(0.9195)"><u>F</u>ormat:</div>
<div class="combo" style="left:1128px;top:186px;width:167px;height:22px"><div class="txt fx" style="color:#000;transform:scaleX(1.0000);transform-origin:0 50%"></div><div class="btn" style="background:#e1e1e1"><svg style="left:3.5px;top:7.0px" width="9" height="6" viewBox="0 0 9 6"><path d="M0.5 0.7L4.5 4.7L8.5 0.7" stroke="#444" stroke-width="1" fill="none"/></svg></div></div>
<div class="t tr" style="right:233.5px;top:218px;transform:scaleX(0.9643)"><u>O</u>rientation:</div>
<div class="combo" style="left:1128px;top:214px;width:167px;height:22px"><div class="txt fx" style="color:#000;transform:scaleX(0.8960);transform-origin:0 50%">Landscape</div><div class="btn" style="background:#e1e1e1"><svg style="left:3.5px;top:7.0px" width="9" height="6" viewBox="0 0 9 6"><path d="M0.5 0.7L4.5 4.7L8.5 0.7" stroke="#444" stroke-width="1" fill="none"/></svg></div></div>
<div class="t tr" style="right:233.5px;top:245.5px;transform:scaleX(0.9531)"><u>B</u>ackground:</div>
<div class="combo" style="left:1128px;top:241px;width:167px;height:22px"><div class="txt fx" style="color:#000;transform:scaleX(0.9203);transform-origin:0 50%">None</div><div class="btn" style="background:#e1e1e1"><svg style="left:3.5px;top:7.0px" width="9" height="6" viewBox="0 0 9 6"><path d="M0.5 0.7L4.5 4.7L8.5 0.7" stroke="#444" stroke-width="1" fill="none"/></svg></div></div>
<div class="btnb" style="left:1129px;top:270px;width:165px;height:26px"></div>
<svg class="ic" style="left:1167.6px;top:276.6px" width="14.4" height="14.4" viewBox="0 0 24 24"><rect x="3" y="0.6" width="18" height="22.8" fill="#fff" stroke="#8a8a8a" stroke-width="1.5"/><circle cx="8.4" cy="6.6" r="2.6" fill="#e9c776"/><path d="M3.8 22.4L9.8 13.6L12.6 16.4L16.4 11L20.3 17V22.6Z" fill="#3c6bb0"/></svg>
<div class="t" style="left:1185.7px;top:276.5px;transform:scaleX(0.9040);"><u>I</u>nsert Image...</div>
<div class="t tr" style="right:233.5px;top:307px;transform:scaleX(0.9069)">Master Slide:</div>
<div class="combo" style="left:1128px;top:303px;width:167px;height:22px"><div class="txt fx" style="color:#000;transform:scaleX(0.9259);transform-origin:0 50%">Default</div><div class="btn" style="background:#e1e1e1"><svg style="left:3.5px;top:7.0px" width="9" height="6" viewBox="0 0 9 6"><path d="M0.5 0.7L4.5 4.7L8.5 0.7" stroke="#444" stroke-width="1" fill="none"/></svg></div></div>
<div class="a" style="left:1128px;top:332px;width:12px;height:12px;background:#fff;border:1px solid #333"></div>
<div class="t" style="left:1144.4px;top:331.5px;transform:scaleX(0.9372);">Master Bac<u>k</u>ground</div>
<div class="a" style="left:1128px;top:353px;width:12px;height:12px;background:#fff;border:1px solid #333"></div>
<div class="t" style="left:1144.4px;top:352.5px;transform:scaleX(0.9210);">Master Ob<u>j</u>ects</div>
<div class="btnb" style="left:1129px;top:374px;width:165px;height:26px"></div>
<svg class="ic" style="left:1170.4px;top:379.0px" width="15.6" height="15.6" viewBox="0 0 24 24"><rect x="0.8" y="3.4" width="22.4" height="17.2" fill="#a9c6ee" stroke="#566579" stroke-width="1.6"/><rect x="3.6" y="11.6" width="16.8" height="6" fill="#3c6bb0"/><path d="M3.6 7.6H20.4" stroke="#5f86c4" stroke-width="1.6"/></svg>
<div class="t" style="left:1189.7px;top:380px;transform:scaleX(0.9195);">Master <u>V</u>iew</div>
<div class="a" style="left:1133px;top:432px;width:91px;height:63px;border:1px solid #000"></div>
<div class="lay" style="left:1059px;top:442px"></div>
<div class="lay" style="left:1150px;top:442px"><i class="h" style="left:3px;top:3px;width:50px;height:8px"></i><i class="" style="left:3px;top:13px;width:50px;height:26px"></i><i class="h" style="left:7px;top:17px;width:42px;height:4px"></i></div>
<div class="lay" style="left:1240px;top:442px"><i class="h" style="left:3px;top:3px;width:50px;height:8px"></i><i class="" style="left:3px;top:13px;width:50px;height:26px"></i></div>
<div class="lay" style="left:1059px;top:504px"><i class="h" style="left:3px;top:3px;width:50px;height:8px"></i><i class="" style="left:3px;top:13px;width:24px;height:26px"></i><i class="" style="left:29px;top:13px;width:24px;height:26px"></i></div>
<div class="lay" style="left:1150px;top:504px"><i class="h" style="left:3px;top:3px;width:50px;height:8px"></i></div>
<div class="lay" style="left:1240px;top:504px"><i class="f" style="left:3px;top:3px;width:50px;height:36px"></i><i class="h" style="left:7px;top:17px;width:42px;height:4px"></i><i class="h" style="left:11px;top:23px;width:34px;height:4px"></i></div>
<div class="lay" style="left:1059px;top:567px"><i class="h" style="left:3px;top:3px;width:50px;height:8px"></i><i class="" style="left:3px;top:13px;width:24px;height:12px"></i><i class="" style="left:3px;top:27px;width:24px;height:12px"></i><i class="" style="left:29px;top:13px;width:24px;height:26px"></i></div>
<div class="lay" style="left:1150px;top:567px"><i class="h" style="left:3px;top:3px;width:50px;height:8px"></i><i class="" style="left:3px;top:13px;width:24px;height:26px"></i><i class="" style="left:29px;top:13px;width:24px;height:12px"></i><i class="" style="left:29px;top:27px;width:24px;height:12px"></i></div>
<div class="lay" style="left:1240px;top:567px"><i class="h" style="left:3px;top:3px;width:50px;height:8px"></i><i class="" style="left:3px;top:13px;width:24px;height:12px"></i><i class="" style="left:29px;top:13px;width:24px;height:12px"></i><i class="" style="left:3px;top:27px;width:50px;height:12px"></i></div>
<div class="lay" style="left:1059px;top:630px"><i class="h" style="left:3px;top:3px;width:50px;height:8px"></i><i class="" style="left:3px;top:13px;width:50px;height:12px"></i><i class="" style="left:3px;top:27px;width:50px;height:12px"></i></div>
<div class="lay" style="left:1150px;top:630px"><i class="h" style="left:3px;top:3px;width:50px;height:8px"></i><i class="" style="left:3px;top:13px;width:24px;height:12px"></i><i class="" style="left:29px;top:13px;width:24px;height:12px"></i><i class="" style="left:3px;top:27px;width:24px;height:12px"></i><i class="" style="left:29px;top:27px;width:24px;height:12px"></i></div>
<div class="lay" style="left:1240px;top:630px"><i class="h" style="left:3px;top:3px;width:50px;height:8px"></i><i class="" style="left:3px;top:13px;width:15px;height:12px"></i><i class="" style="left:20px;top:13px;width:15px;height:12px"></i><i class="" style="left:38px;top:13px;width:15px;height:12px"></i><i class="" style="left:3px;top:27px;width:15px;height:12px"></i><i class="" style="left:20px;top:27px;width:15px;height:12px"></i><i class="" style="left:38px;top:27px;width:15px;height:12px"></i></div>
<div class="a" style="left:1334px;top:138px;width:2px;height:12px;background:repeating-linear-gradient(#666 0 2px,transparent 2px 5px)"></div>
<div class="a" style="left:1320px;top:166px;width:30px;height:30px;background:#f8f8f8;border:1px solid #c2c2c2;border-radius:3px"></div>
<svg class="ic" style="left:1323.0px;top:169.0px" width="24" height="24" viewBox="0 0 24 24"><rect x="2.8" y="3" width="18.4" height="18.6" fill="#fff" stroke="#6a6a6a" stroke-width="1.1"/><rect x="2.8" y="3" width="18.4" height="3.8" fill="#767676"/><path d="M6 12H18M6 15.4H18" stroke="#5e5e5e" stroke-width="1"/><rect x="12.2" y="10.6" width="2.2" height="2.8" fill="#5e5e5e"/><rect x="8.6" y="14" width="2.2" height="2.8" fill="#5e5e5e"/></svg>
<svg class="ic" style="left:1323.0px;top:202.5px" width="24" height="24" viewBox="0 0 24 24"><rect x="2.8" y="2.8" width="18.4" height="18.4" fill="none" stroke="#7a7a7a" stroke-dasharray="2 1.6"/><rect x="1.8" y="1.8" width="2.2" height="2.2" fill="#555"/><rect x="20" y="1.8" width="2.2" height="2.2" fill="#555"/><rect x="1.8" y="20" width="2.2" height="2.2" fill="#555"/><rect x="20" y="20" width="2.2" height="2.2" fill="#555"/><polygon points="12.0,5.8 13.8,10.2 18.5,10.5 14.9,13.5 16.0,18.1 12.0,15.6 8.0,18.1 9.1,13.5 5.5,10.5 10.2,10.2" fill="#ebbf66"/></svg>
<svg class="ic" style="left:1323.0px;top:236.0px" width="24" height="24" viewBox="0 0 24 24"><rect x="2.8" y="2.8" width="18.4" height="18.4" fill="#fff" stroke="#5e5e5e"/><rect x="2.8" y="2.8" width="18.4" height="2.6" fill="#5e5e5e"/><rect x="2.8" y="18.6" width="18.4" height="2.6" fill="#5e5e5e"/><rect x="4.6" y="3.5" width="1.3" height="1.2" fill="#fff"/><rect x="4.6" y="19.3" width="1.3" height="1.2" fill="#fff"/><rect x="7.4" y="3.5" width="1.3" height="1.2" fill="#fff"/><rect x="7.4" y="19.3" width="1.3" height="1.2" fill="#fff"/><rect x="10.2" y="3.5" width="1.3" height="1.2" fill="#fff"/><rect x="10.2" y="19.3" width="1.3" height="1.2" fill="#fff"/><rect x="13.0" y="3.5" width="1.3" height="1.2" fill="#fff"/><rect x="13.0" y="19.3" width="1.3" height="1.2" fill="#fff"/><rect x="15.8" y="3.5" width="1.3" height="1.2" fill="#fff"/><rect x="15.8" y="19.3" width="1.3" height="1.2" fill="#fff"/><rect x="18.6" y="3.5" width="1.3" height="1.2" fill="#fff"/><rect x="18.6" y="19.3" width="1.3" height="1.2" fill="#fff"/></svg>
<svg class="ic" style="left:1323.0px;top:269.0px" width="24" height="24" viewBox="0 0 24 24"><rect x="3" y="4" width="18.4" height="16" fill="#a9c6ee" stroke="#4d5c72" stroke-width="1.2"/><rect x="5.2" y="12" width="14" height="6" fill="#3c6bb0"/><path d="M5.2 7.6H19.2" stroke="#5f86c4" stroke-width="1"/></svg>
<svg class="ic" style="left:1323.0px;top:302.0px" width="24" height="24" viewBox="0 0 24 24"><text x="1.6" y="19.6" font-size="19" font-family="Liberation Sans, sans-serif" fill="#666" textLength="12" lengthAdjust="spacingAndGlyphs">A</text><text x="8.4" y="19.6" font-size="19" font-weight="bold" font-family="Liberation Sans, sans-serif" fill="#3c6bb0" textLength="13" lengthAdjust="spacingAndGlyphs">A</text><path d="M3.4 21.6H21.6" stroke="#3c6bb0" stroke-width="1.1"/></svg>
<svg class="ic" style="left:1323.0px;top:335.5px" width="24" height="24" viewBox="0 0 24 24"><path d="M1.4 18.6V5.8Q1.4 4.6 2.6 4.6H8L9.6 3.4H17.4Q18.6 3.4 18.6 4.6V18.6Z" fill="#f3d49a"/><path d="M1.4 8H19V18.6H1.4Z" fill="#efc77e"/><rect x="9" y="9.6" width="12.4" height="11.6" fill="#fff" stroke="#6a6a6a"/><circle cx="12.4" cy="12.6" r="1.2" fill="#e9c776"/><path d="M9.6 20.6L13.4 16.6L15 17.8L17.8 15L20.8 18V20.6Z" fill="#3c6bb0"/></svg>
<svg class="ic" style="left:1323.0px;top:369.0px" width="24" height="24" viewBox="0 0 24 24"><circle cx="12" cy="12" r="9.2" fill="#fff" stroke="#8a8a8a" stroke-width="1.2"/><path d="M16.6 7.4L13.6 13.6L7.4 16.6L10.4 10.4Z" fill="#3c6bb0"/><circle cx="12" cy="12" r="1.2" fill="#fff"/></svg>
<div class="a" style="left:0;top:778px;width:1355px;height:22px;background:#f0f0f0;border-top:1px solid #b9b9b9"></div>
<div class="t" style="left:11px;top:783px;transform:scaleX(0.8998);">Slide 1 of 1</div>
<div class="a" style="left:69px;top:782px;width:1px;height:16px;background:#b5b5b5"></div>
<div class="a" style="left:432.5px;top:782px;width:1px;height:16px;background:#b5b5b5"></div>
<div class="a" style="left:657px;top:782px;width:1px;height:16px;background:#b5b5b5"></div>
<div class="a" style="left:835.5px;top:782px;width:1px;height:16px;background:#b5b5b5"></div>
<div class="a" style="left:857.5px;top:782px;width:1px;height:16px;background:#b5b5b5"></div>
<div class="a" style="left:886px;top:782px;width:1px;height:16px;background:#b5b5b5"></div>
<div class="a" style="left:1150.5px;top:782px;width:1px;height:16px;background:#b5b5b5"></div>
<div class="a" style="left:1173px;top:782px;width:1px;height:16px;background:#b5b5b5"></div>
<div class="a" style="left:1309.5px;top:782px;width:1px;height:16px;background:#b5b5b5"></div>
<div class="t" style="left:441.6px;top:783px;transform:scaleX(0.9575);">Default</div>
<svg class="ic" style="left:666.0px;top:781.0px" width="14" height="14" viewBox="0 0 24 24"><rect x="7" y="7" width="16" height="10.6" fill="none" stroke="#6a6a6a" stroke-width="1.6"/><path d="M7 1V11M1 7H12" stroke="#6a6a6a" stroke-width="1.6"/></svg>
<div class="t" style="left:686.9px;top:783px;transform:scaleX(0.9169);">-1,13 / -0,24</div>
<svg class="ic" style="left:754.5px;top:781.0px" width="14" height="14" viewBox="0 0 24 24"><rect x="7" y="7" width="16" height="10.6" fill="none" stroke="#6a6a6a" stroke-width="1.6"/><path d="M7 2H23M2 7V17.6M7 0.4V3.6M23 0.4V3.6M0.4 7H3.6M0.4 17.6H3.6" stroke="#6a6a6a" stroke-width="1.4"/></svg>
<div class="t" style="left:772.8px;top:783px;transform:scaleX(0.8645);">0,00 x 0,00</div>
<svg class="ic" style="left:841.7px;top:783.3px" width="11" height="11" viewBox="0 0 24 24"><path d="M3 3H18L21 6V21H3Z" fill="none" stroke="#6a6a6a" stroke-width="2"/><rect x="7" y="4" width="8" height="5" fill="none" stroke="#6a6a6a" stroke-width="1.6"/><rect x="7" y="13.6" width="10" height="7" fill="none" stroke="#6a6a6a" stroke-width="1.6"/></svg>
<div class="t" style="left:981.9px;top:783px;transform:scaleX(0.8972);">Spanish (Spain)</div>
<svg class="ic" style="left:1154.3px;top:781.5px" width="16" height="16" viewBox="0 0 24 24"><circle cx="12" cy="12" r="8.4" fill="none" stroke="#7a96b8" stroke-width="1.4"/><path d="M12 1V23M1 12H23" stroke="#5b7c9f" stroke-width="1.4"/><path d="M9.6 3.6L12 1L14.4 3.6M9.6 20.4L12 23L14.4 20.4M3.6 9.6L1 12L3.6 14.4M20.4 9.6L23 12L20.4 14.4" fill="none" stroke="#5b7c9f" stroke-width="1.3"/></svg>
<div class="a" style="left:1182.5px;top:789px;width:9px;height:2px;background:#444"></div>
<div class="a" style="left:1197px;top:790px;width:92px;height:1px;background:#777"></div>
<div class="a" style="left:1241.3px;top:784px;width:3px;height:11px;background:#444"></div>
<div class="a" style="left:1294px;top:789px;width:10px;height:2px;background:#444"></div><div class="a" style="left:1298px;top:785px;width:2px;height:10px;background:#444"></div>
<div class="t" style="left:1319.1px;top:783px;transform:scaleX(0.8375);">122%</div>
<div class="a" style="left:325px;top:147px;width:705px;height:505px;background:#f0f0f0;border:1px solid #6a6a6a;box-shadow:0 4px 14px rgba(0,0,0,.42),0 0 5px rgba(0,0,0,.25)"></div>
<div class="a" style="left:326px;top:148px;width:703px;height:29px;background:#fff"></div>
<div class="t" style="left:333.6px;top:155px;transform:scaleX(0.9144);">Select a Template</div>
<svg style="left:1010px;top:156.5px" width="10" height="10" viewBox="0 0 10 10"><path d="M0 0L10 10M10 0L0 10" stroke="#111" stroke-width="1.1" fill="none"/></svg>
<div class="a" style="left:334px;top:184px;width:290px;height:22px;background:#fff;border:1px solid #b4b4b4"></div>
<div class="t" style="left:336.5px;top:188.5px;transform:scaleX(0.8708);color:#8a8a8a">Search...</div>
<div class="t" style="left:635px;top:188.5px;transform:scaleX(0.9261);">Filter</div>
<div class="combo" style="left:672px;top:184px;width:101px;height:22px"><div class="txt fx" style="color:#9a9a9a;transform:scaleX(0.9174);transform-origin:0 50%">Presentations</div><div class="btn" style="background:#cccccc"><svg style="left:3.5px;top:7.0px" width="9" height="6" viewBox="0 0 9 6"><path d="M0.5 0.7L4.5 4.7L8.5 0.7" stroke="#aaa" stroke-width="1" fill="none"/></svg></div></div>
<div class="combo" style="left:784px;top:184px;width:237px;height:22px"><div class="txt fx" style="color:#000;transform:scaleX(0.9076);transform-origin:0 50%">All Categories</div><div class="btn" style="background:#e1e1e1"><svg style="left:3.5px;top:7.0px" width="9" height="6" viewBox="0 0 9 6"><path d="M0.5 0.7L4.5 4.7L8.5 0.7" stroke="#444" stroke-width="1" fill="none"/></svg></div></div>
<div class="a" style="left:334px;top:212px;width:688px;height:351px;background:#fff;border:1px solid #a6a6a6"></div>
<div class="a" style="left:1004px;top:213px;width:17px;height:349px;background:#f0f0f0"></div>
<div class="a" style="left:1005px;top:229px;width:14px;height:19px;background:#cdcdcd"></div>
<svg style="left:1008px;top:218.5px" width="8" height="6" viewBox="0 0 8 6"><path d="M0.5 5L4 1.2L7.5 5" stroke="#333" stroke-width="1.6" fill="none"/></svg>
<svg style="left:1008px;top:552px" width="8" height="6" viewBox="0 0 8 6"><path d="M0.5 1L4 4.8L7.5 1" stroke="#333" stroke-width="1.6" fill="none"/></svg>
<div class="a" style="left:362px;top:238px;width:109px;height:83px;overflow:hidden;border:1px solid #8f8f8f;background:#fff"><svg style="left:0;top:0" width="107" height="81" viewBox="0 0 1070 810" font-family="Liberation Sans, sans-serif"><rect width="1070" height="810" fill="#fff"/><rect x="0" y="20" width="1020" height="128" fill="#e74c3c"/><text x="30" y="118" font-size="34" font-weight="bold" fill="#fff">Lorem ipsum</text><g font-size="33" fill="#222" stroke="#222" stroke-width="1.3"><text x="30" y="240" textLength="830" lengthAdjust="spacingAndGlyphs">Lorem ipsum dolor sit amet, consectetur adipiscing elit.</text><text x="30" y="300" textLength="700" lengthAdjust="spacingAndGlyphs">Vestibulum consequat mi quis pretium semper.</text><text x="30" y="360" textLength="870" lengthAdjust="spacingAndGlyphs">Proin luctus orci ac neque venenatis, quis commodo dolor</text><text x="30" y="405">posuere.</text></g><rect x="10" y="725" width="56" height="56" fill="#e74c3c"/><rect x="88" y="725" width="690" height="56" fill="#bdc3c7"/><rect x="800" y="725" width="270" height="56" fill="#e74c3c"/></svg></div>
<div class="lbl" style="left:336px;top:334px;letter-spacing:0;transform:scaleX(0.9223)">Alizarin</div>
<div class="a" style="left:524.5px;top:238px;width:109px;height:83px;overflow:hidden;border:1px solid #8f8f8f;background:#fff"><svg style="left:0;top:0" width="107" height="81" viewBox="0 0 1070 810" font-family="Liberation Sans, sans-serif"><rect width="1070" height="810" fill="#fff"/><rect x="0" y="0" width="1070" height="170" fill="#fbf07c"/><rect x="0" y="640" width="1070" height="170" fill="#fbf07c"/><polygon points="242,60 221,96 179,96 158,60 179,24 221,24" fill="#faeb66"/><polygon points="372,110 351,146 309,146 288,110 309,74 351,74" fill="#faeb66"/><polygon points="502,60 481,96 439,96 418,60 439,24 481,24" fill="#faeb66"/><polygon points="632,110 611,146 569,146 548,110 569,74 611,74" fill="#faeb66"/><polygon points="762,50 741,86 699,86 678,50 699,14 741,14" fill="#faeb66"/><polygon points="892,90 871,126 829,126 808,90 829,54 871,54" fill="#faeb66"/><polygon points="1022,130 1001,166 959,166 938,130 959,94 1001,94" fill="#faeb66"/><polygon points="102,150 81,186 39,186 18,150 39,114 81,114" fill="#faeb66"/><polygon points="362,740 341,776 299,776 278,740 299,704 341,704" fill="#faeb66"/><polygon points="472,690 451,726 409,726 388,690 409,654 451,654" fill="#faeb66"/><polygon points="682,740 661,776 619,776 598,740 619,704 661,704" fill="#faeb66"/><polygon points="942,760 921,796 879,796 858,760 879,724 921,724" fill="#faeb66"/><polygon points="1052,700 1031,736 989,736 968,700 989,664 1031,664" fill="#faeb66"/><polygon points="102,690 81,726 39,726 18,690 39,654 81,654" fill="#faeb66"/><polygon points="116,80 93,120 47,120 24,80 47,40 93,40" fill="#f9c474"/><polygon points="1041,80 1018,120 972,120 949,80 972,40 1018,40" fill="#f9c474"/><rect x="90" y="125" width="150" height="50" fill="#fff"/><rect x="250" y="0" width="150" height="30" fill="#fff"/><polygon points="830,150 810,185 770,185 750,150 770,115 810,115" fill="#fff"/><rect x="0" y="170" width="1070" height="20" fill="#fff"/><polygon points="287,650 266,686 224,686 203,650 224,614 266,614" fill="#fff"/><polygon points="1042,650 1021,686 979,686 958,650 979,614 1021,614" fill="#fff"/><polygon points="578,740 559,773 521,773 502,740 521,707 559,707" fill="#fff"/><polygon points="175,740 150,783 100,783 75,740 100,697 150,697" fill="#f9c474"/><polygon points="700,640 880,640 850,720 790,770 730,720" fill="#f8b84e"/><text x="535" y="385" font-size="54" text-anchor="middle" fill="#2a2a2a" stroke="#2a2a2a" stroke-width="1.8">Lorem ipsum</text><text x="535" y="565" font-size="37" text-anchor="middle" fill="#2a2a2a" stroke="#2a2a2a" stroke-width="1.3">Lorem ipsum</text></svg></div>
<div class="lbl" style="left:498.20000000000005px;top:334px;letter-spacing:0;transform:scaleX(0.8995)">Beehive</div>
<div class="a" style="left:687px;top:238px;width:109px;height:83px;overflow:hidden;border:1px solid #8f8f8f;background:#fff"><svg style="left:0;top:0" width="107" height="81" viewBox="0 0 1070 810" font-family="Liberation Sans, sans-serif"><defs><linearGradient id="bcg" x1="0" x2="1" y1="0" y2="0"><stop offset="0" stop-color="#0a7fd0"/><stop offset="0.12" stop-color="#1b9ce2"/><stop offset="0.5" stop-color="#5bbaea"/><stop offset="1" stop-color="#e6f3fb"/></linearGradient></defs><rect width="1070" height="810" fill="#fff"/><rect x="0" y="0" width="1070" height="95" fill="url(#bcg)"/><rect x="0" y="695" width="1070" height="115" fill="url(#bcg)"/><text x="525" y="80" font-size="59" text-anchor="middle" fill="#fff">Lorem ipsum</text><g font-size="36" fill="#4a80c6"><circle cx="65" cy="213" r="8" fill="#4a80c6"/><text x="90" y="225" textLength="790" lengthAdjust="spacingAndGlyphs">Dolor sit amet, consectetur adipiscing elit</text><circle cx="65" cy="281" r="8" fill="#4a80c6"/><text x="90" y="293" textLength="885" lengthAdjust="spacingAndGlyphs">Vestibulum consequat mi quis pretium semper</text><circle cx="65" cy="350" r="8" fill="#4a80c6"/><text x="90" y="362" textLength="690" lengthAdjust="spacingAndGlyphs">Proin luctus orci ac neque venenatis</text></g></svg></div>
<div class="lbl" style="left:661.3px;top:334px;letter-spacing:0;transform:scaleX(0.8979)">Blue Curve</div>
<div class="a" style="left:849.5px;top:238px;width:109px;height:83px;overflow:hidden;border:1px solid #8f8f8f;background:#fff"><svg style="left:0;top:0" width="107" height="81" viewBox="0 0 1070 810" font-family="Liberation Sans, sans-serif"><defs><radialGradient id="bpg" cx="0.5" cy="0.5" r="0.75"><stop offset="0" stop-color="#389db0"/><stop offset="0.6" stop-color="#2a88a8"/><stop offset="1" stop-color="#1f769b"/></radialGradient></defs><rect width="1070" height="810" fill="url(#bpg)"/><g fill="none" stroke="#9fd3df" stroke-width="7" opacity="0.8"><ellipse cx="60" cy="105" rx="62" ry="115"/><ellipse cx="60" cy="105" rx="35" ry="115"/><path d="M0 60H120M0 120H120"/></g><g fill="none" stroke="#e6f3f5" stroke-width="9" opacity="0.85"><path d="M30 640L55 690L20 720L70 745L30 780L90 800M60 650L85 720L100 770M10 690L45 760L5 800"/></g><rect x="905" y="45" width="120" height="62" rx="14" fill="#f6ebe4" transform="rotate(14 965 76)"/><path d="M630 770L1060 483" stroke="#d5e26f" stroke-width="24" stroke-linecap="round"/><g fill="none" stroke="#bfe6ee" stroke-width="9"><circle cx="915" cy="700" r="46"/><circle cx="1000" cy="625" r="60"/><circle cx="1055" cy="765" r="50"/></g><text x="530" y="240" font-size="81" text-anchor="middle" fill="#cdf0f6">Lorem Ipsum</text><text x="525" y="548" font-size="37" text-anchor="middle" fill="#d6f0f5" textLength="780" lengthAdjust="spacingAndGlyphs">Dolor sit amet, consectetur adipiscing elit</text></svg></div>
<div class="lbl" style="left:823px;top:334px;letter-spacing:0;transform:scaleX(0.9281)">Blueprint Plans</div>
<div class="a" style="left:345px;top:405.5px;width:143px;height:81px;overflow:hidden;border:1px solid #8f8f8f;background:#fff"><svg style="left:0;top:0" width="141" height="79" viewBox="0 0 1410 790" font-family="Liberation Sans, sans-serif"><defs><radialGradient id="bbg" cx="0.55" cy="0.2" r="0.7"><stop offset="0" stop-color="#3a86e6"/><stop offset="1" stop-color="#1f6fd6"/></radialGradient></defs><rect width="1410" height="790" fill="#fff"/><rect x="0" y="0" width="1070" height="170" fill="url(#bbg)"/><text x="58" y="112" font-size="56" fill="#fff">Lorem ipsum</text><text x="700" y="395" font-size="50" text-anchor="middle" fill="#222" stroke="#222" stroke-width="1.3" textLength="690" lengthAdjust="spacingAndGlyphs">Lorem ipsum dolor sit amet,</text><text x="700" y="458" font-size="50" text-anchor="middle" fill="#222" stroke="#222" stroke-width="1.3" textLength="650" lengthAdjust="spacingAndGlyphs">consectetur adipiscing elit</text></svg></div>
<div class="lbl" style="left:336.3px;top:500px;letter-spacing:0;transform:scaleX(0.9372)">Bright Blue</div>
<div class="a" style="left:507.5px;top:405.5px;width:143px;height:81px;overflow:hidden;border:1px solid #8f8f8f;background:#fff"><svg style="left:0;top:0" width="141" height="79" viewBox="0 0 1410 790" font-family="Liberation Sans, sans-serif"><rect width="1410" height="790" fill="#fff"/><rect x="0" y="0" width="1410" height="36" fill="#000"/><rect x="0" y="700" width="1410" height="90" fill="#000"/><rect x="0" y="82" width="1262" height="378" fill="#c9233a"/><text x="6" y="300" font-size="82" fill="#fbe6ea">Lorem Ipsum</text><text x="838" y="540" font-size="48" text-anchor="middle" fill="#222" stroke="#222" stroke-width="1.3">Dolor sit amet,</text><text x="850" y="606" font-size="48" text-anchor="middle" fill="#222" stroke="#222" stroke-width="1.3" textLength="640" lengthAdjust="spacingAndGlyphs">consectetur adipiscing elit</text></svg></div>
<div class="lbl" style="left:498.20000000000005px;top:500px;letter-spacing:0;transform:scaleX(0.8426)">Classy Red</div>
<div class="a" style="left:670px;top:405.5px;width:143px;height:81px;overflow:hidden;border:1px solid #8f8f8f;background:#fff"><svg style="left:0;top:0" width="141" height="79" viewBox="0 0 1410 790" font-family="Liberation Sans, sans-serif"><defs><linearGradient id="dng" x1="0" x2="0" y1="0" y2="1"><stop offset="0.65" stop-color="#fff"/><stop offset="1" stop-color="#ededed"/></linearGradient></defs><rect width="1410" height="790" fill="url(#dng)"/><g fill="none" stroke="#d3e3f2" stroke-width="12" opacity="0.75"><path d="M90 0 C90 40 200 60 200 100 C200 140 90 160 90 200 C90 240 200 260 200 300 C200 340 90 360 90 400 C90 440 200 460 200 500 C200 540 90 560 90 600 C90 640 200 660 200 700 C200 740 90 760 90 800"/><path d="M200 0 C200 40 90 60 90 100 C90 140 200 160 200 200 C200 240 90 260 90 300 C90 340 200 360 200 400 C200 440 90 460 90 500 C90 540 200 560 200 600 C200 640 90 660 90 700 C90 740 200 760 200 800"/></g><g stroke="#dde9f5" stroke-width="7"><path d="M105 20H185"/><path d="M105 70H185"/><path d="M105 120H185"/><path d="M105 170H185"/><path d="M105 220H185"/><path d="M105 270H185"/><path d="M105 320H185"/><path d="M105 370H185"/><path d="M105 420H185"/><path d="M105 470H185"/><path d="M105 520H185"/><path d="M105 570H185"/><path d="M105 620H185"/><path d="M105 670H185"/><path d="M105 720H185"/><path d="M105 770H185"/></g><g font-family="Liberation Serif, serif" fill="#222"><text x="785" y="112" font-size="56" text-anchor="middle">Lorem ipsum</text><text x="785" y="405" font-size="52" font-weight="bold" text-anchor="middle" textLength="630" lengthAdjust="spacingAndGlyphs">Lorem ipsum dolor sit amet</text><text x="785" y="468" font-size="52" font-weight="bold" text-anchor="middle" textLength="600" lengthAdjust="spacingAndGlyphs">consectetur adipiscing elit.</text></g></svg></div>
<div class="lbl" style="left:660.6px;top:500px;letter-spacing:0;transform:scaleX(0.9391)">DNA</div>
<div class="a" style="left:849.5px;top:404.5px;width:109px;height:83px;overflow:hidden;border:1px solid #8f8f8f;background:#fff"><svg style="left:0;top:0" width="107" height="81" viewBox="0 0 1070 810" font-family="Liberation Sans, sans-serif"><rect width="1070" height="810" fill="#ebebeb"/><polygon points="0,0 114,0 0,434" fill="#ec1c24"/><polygon points="840,0 1070,0 1070,235" fill="#f0b400"/><polygon points="0,620 0,810 210,810" fill="#a3195b"/><polygon points="1070,390 1070,810 965,810" fill="#21a087"/><text x="530" y="125" font-size="62" text-anchor="middle" fill="#444">Lorem ipsum</text><g font-size="43" fill="#6c6c6c"><circle cx="92" cy="214" r="7" fill="#777"/><text x="118" y="228" textLength="290" lengthAdjust="spacingAndGlyphs">Dolor sit amet</text><circle cx="92" cy="284" r="7" fill="#777"/><text x="118" y="298" textLength="560" lengthAdjust="spacingAndGlyphs">consectetur adipiscing elit</text><circle cx="92" cy="354" r="7" fill="#777"/><text x="118" y="368" textLength="830" lengthAdjust="spacingAndGlyphs">Vestibulum consequat mi quis pretium</text><text x="118" y="418" textLength="150" lengthAdjust="spacingAndGlyphs">semper</text><circle cx="92" cy="474" r="7" fill="#777"/><text x="118" y="488" textLength="780" lengthAdjust="spacingAndGlyphs">Proin luctus orci ac neque venenatis</text></g></svg></div>
<div class="lbl" style="left:823.2px;top:500px;letter-spacing:0;transform:scaleX(0.9029)">Focus</div>
<div class="a" style="left:333px;top:580px;width:13px;height:13px;background:#fff;border:1px solid #333"></div>
<svg style="left:335px;top:582.5px" width="9" height="8" viewBox="0 0 9 8"><path d="M0.7 4L3.3 6.7L8.5 0.8" stroke="#222" stroke-width="1.2" fill="none"/></svg>
<div class="t" style="left:349.7px;top:581px;transform:scaleX(0.9424);"><u>S</u>how this dialog at startup</div>
<svg class="ic" style="left:951.5px;top:578.0px" width="20" height="20" viewBox="0 0 24 24"><path d="M2 1.2H12.4L17.8 6.6V22.4H2Z" fill="#fff" stroke="#8c8c8c" stroke-width="1.2"/><path d="M12.4 1.2V6.6H17.8" fill="none" stroke="#8c8c8c" stroke-width="1.2"/><path d="M21 18.6H9.8M13.4 15.2L9.6 18.6L13.4 22" fill="none" stroke="#5b7c9f" stroke-width="1.3"/></svg>
<div class="t" style="left:978.2px;top:581px;transform:scaleX(0.9559);"><u>I</u>mport</div>
<div class="btnb" style="left:339px;top:612px;width:79px;height:26px;line-height:27px"><span class="fx" style="transform:scaleX(0.9438)"><u>H</u>elp</span></div>
<div class="btnb" style="left:850px;top:612px;width:79px;height:26px;line-height:27px;background:#cccccc;border-color:#bfbfbf;color:#8c8c8c"><span class="fx" style="transform:scaleX(0.9201)"><u>O</u>pen</span></div>
<div class="btnb" style="left:937px;top:612px;width:79px;height:26px;line-height:27px"><span class="fx" style="transform:scaleX(0.8806)"><u>C</u>ancel</span></div>
<div class="a" style="left:0;top:14px;width:1px;height:786px;background:linear-gradient(#6a6a6a 0,#2c2c2c 6px,#262626 166px,#8c8c8c 170px,#a2a2a2 100%)"></div>
<div class="a" style="left:1354px;top:1px;width:1px;height:799px;background:linear-gradient(#a0a0a0 0,#8a8a8a 14px,#6a6a6a 16px,#7a7a7a 100%)"></div>
</body></html>
